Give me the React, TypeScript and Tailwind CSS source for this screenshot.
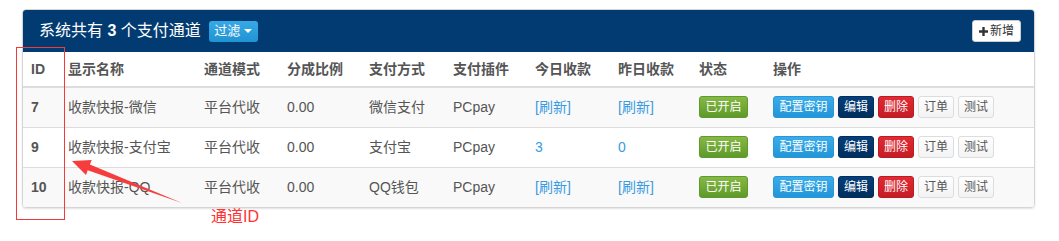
import React from "react";

const F = { fontFamily: '"Liberation Sans", "Noto Sans CJK SC", sans-serif' };

const rows = [
  { id: "7", name: "收款快报-微信", mode: "平台代收", ratio: "0.00", method: "微信支付", plugin: "PCpay", today: "[刷新]", yest: "[刷新]" },
  { id: "9", name: "收款快报-支付宝", mode: "平台代收", ratio: "0.00", method: "支付宝", plugin: "PCpay", today: "3", yest: "0" },
  { id: "10", name: "收款快报-QQ", mode: "平台代收", ratio: "0.00", method: "QQ钱包", plugin: "PCpay", today: "[刷新]", yest: "[刷新]" },
];

const widths = [37, 136, 83, 82, 84, 82, 83, 81, 74, 271];
const heads = ["ID", "显示名称", "通道模式", "分成比例", "支付方式", "支付插件", "今日收款", "昨日收款", "状态", "操作"];

function Btn({ children, cls }: { children: React.ReactNode; cls: string }) {
  return (
    <span className={`inline-flex h-[22px] items-center rounded-[3px] border px-[5px] text-[12px] leading-none ${cls}`}>
      {children}
    </span>
  );
}

export default function App() {
  return (
    <div className="relative h-[241px] w-[1059px] bg-white pl-[22px] pt-[9px]" style={F}>
      <div className="w-[1013px] overflow-hidden rounded-[4px] border border-[#d5d5d5] shadow-[0_1px_2px_rgba(0,0,0,0.12)]">
        <div className="flex h-[42px] items-center justify-between bg-[#023b72] pl-[16px] pr-[13px]">
          <div className="flex items-center">
            <span className="text-[16px] text-white">
              系统共有 <b className="font-bold">3</b> 个支付通道
            </span>
            <span className="ml-[8px] inline-flex h-[21px] w-[49px] items-center justify-center gap-[4px] rounded-[3px] bg-gradient-to-b from-[#36a9e6] to-[#2093d3] text-[13px] text-white">
              过滤
              <span className="h-0 w-0 border-x-[4px] border-t-[4px] border-x-transparent border-t-white" />
            </span>
          </div>
          <span className="inline-flex h-[22px] w-[49px] items-center justify-center gap-[2px] rounded-[3px] border border-[#ccc] bg-white text-[12px] text-[#333]">
            <svg width="9" height="9" viewBox="0 0 9 9">
              <path d="M3.3 0h2.4v3.3H9v2.4H5.7V9H3.3V5.7H0V3.3h3.3z" fill="#333" />
            </svg>
            新增
          </span>
        </div>
        <table className="w-full table-fixed border-collapse text-[14px] text-[#555]">
          <colgroup>
            {widths.map((w, i) => (
              <col key={i} style={{ width: w }} />
            ))}
          </colgroup>
          <thead>
            <tr className="h-[35px] border-b-2 border-[#ddd] bg-white">
              {heads.map((h) => (
                <th key={h} className="px-[8px] text-left align-middle font-bold text-[#555]">
                  {h}
                </th>
              ))}
            </tr>
          </thead>
          <tbody>
            {rows.map((r, i) => (
              <tr key={r.id} className={`h-[40px] border-t border-[#ddd] ${i % 2 === 0 ? "bg-[#f9f9f9]" : "bg-white"}`}>
                <td className="px-[8px] font-bold">{r.id}</td>
                <td className="px-[8px] whitespace-nowrap">{r.name}</td>
                <td className="px-[8px]">{r.mode}</td>
                <td className="px-[8px]">{r.ratio}</td>
                <td className="px-[8px]">{r.method}</td>
                <td className="px-[8px]">{r.plugin}</td>
                <td className="px-[8px] text-[#3a9be2]">{r.today}</td>
                <td className="px-[8px] text-[#3a9be2]">{r.yest}</td>
                <td className="px-[8px]">
                  <span className="inline-flex h-[22px] w-[49px] items-center justify-center rounded-[3px] border border-[#5f9a2c] bg-gradient-to-b from-[#86b844] to-[#5e9a2a] text-[12px] text-white">
                    已开启
                  </span>
                </td>
                <td className="px-[8px]">
                  <div className="flex gap-[4px]">
                    <Btn cls="w-[61px] justify-center border-[#2a98d6] bg-gradient-to-b from-[#3aaceb] to-[#2296d8] text-white">配置密钥</Btn>
                    <Btn cls="w-[36px] justify-center border-[#022e5c] bg-gradient-to-b from-[#063f7a] to-[#012e5e] text-white">编辑</Btn>
                    <Btn cls="w-[36px] justify-center border-[#b81c25] bg-gradient-to-b from-[#e42a33] to-[#c51c25] text-white">删除</Btn>
                    <Btn cls="w-[36px] justify-center border-[#ddd] bg-gradient-to-b from-white to-[#f3f3f3] text-[#555]">订单</Btn>
                    <Btn cls="w-[36px] justify-center border-[#ddd] bg-gradient-to-b from-white to-[#f3f3f3] text-[#555]">测试</Btn>
                  </div>
                </td>
              </tr>
            ))}
          </tbody>
        </table>
      </div>

      {/* annotation overlays */}
      <div className="pointer-events-none absolute left-[16px] top-[47px] h-[173px] w-[49px] border border-[#f23a3a]" />
      <svg className="pointer-events-none absolute left-0 top-0" width="1059" height="241">
        <polygon
          points="72,161 91.7,159.9 89.9,164.6 182,203 87.7,170.2 86,174.9"
          fill="#f63c3c"
        />
      </svg>
      <span className="absolute left-[211px] top-[207px] text-[16px] leading-[20px] text-[#f33]">通道ID</span>
    </div>
  );
}
